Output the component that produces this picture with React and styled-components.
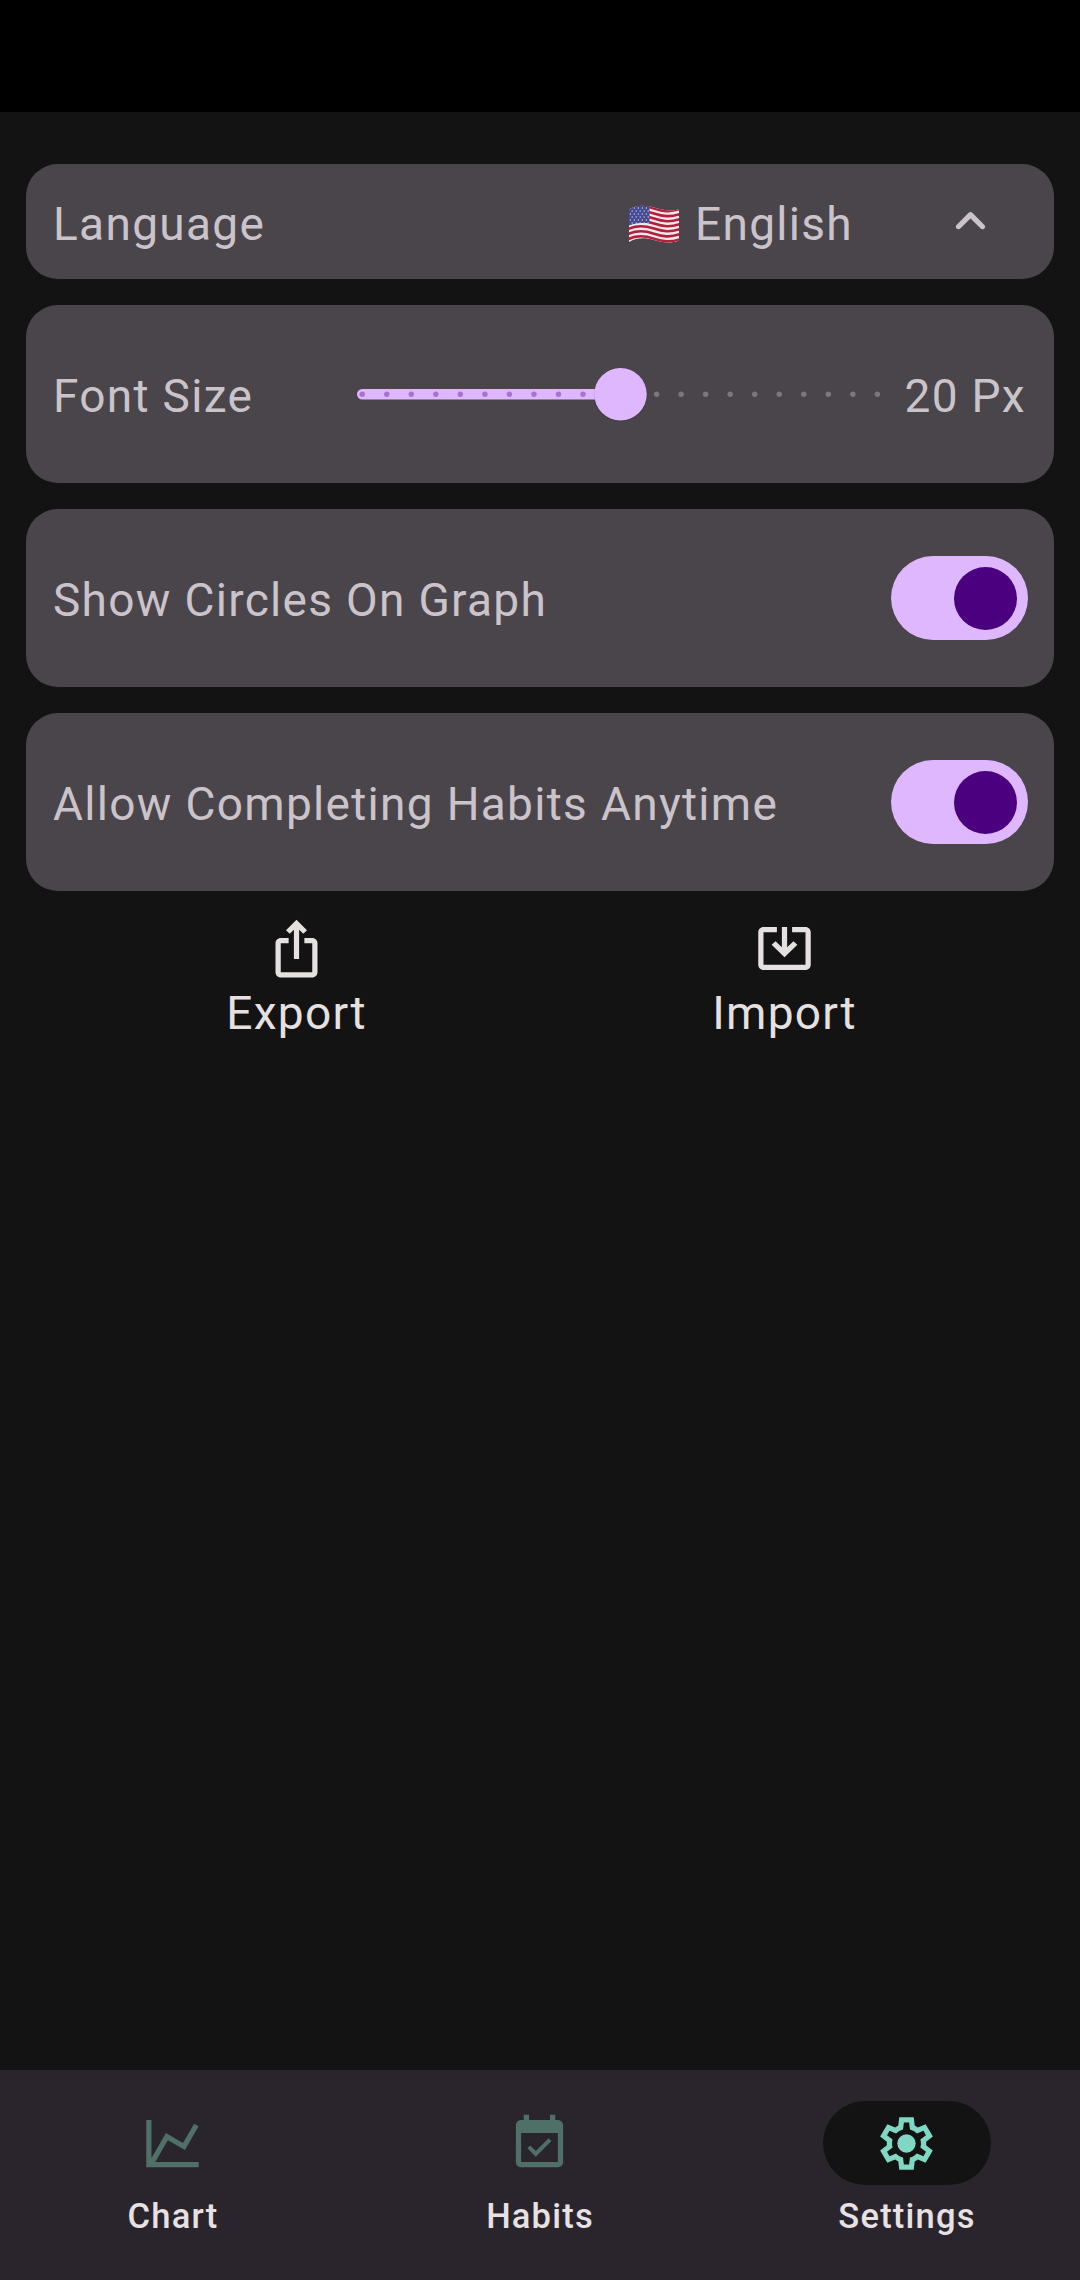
import React from "react";
import styled, { createGlobalStyle } from "styled-components";

const Global = createGlobalStyle`
  body { margin: 0; background: #131313; }
  * { box-sizing: border-box; }
`;

const Screen = styled.div`
  width: 1080px;
  height: 2280px;
  display: flex;
  flex-direction: column;
  background: #131313;
  font-family: Roboto, "Liberation Sans", sans-serif;
`;

const StatusBar = styled.div`
  height: 112px;
  background: #000;
`;

const Content = styled.main`
  flex: 1;
  display: flex;
  flex-direction: column;
  gap: 26px;
  padding: 52px 26px 0;
`;

const Card = styled.section`
  height: ${(p) => p.$height}px;
  display: flex;
  align-items: center;
  justify-content: space-between;
  padding: 0 26px 0 27px;
  border-radius: 32px;
  background: #4a454a;
  color: #cac4ca;
`;

const Label = styled.span`
  font-size: 46px;
  line-height: 63px;
  letter-spacing: 1.31px;
  white-space: nowrap;
  padding-top: 5px;
`;

const SliderValue = styled(Label)`
  width: 124px;
  padding-right: 2px;
  text-align: right;
`;

const LanguagePicker = styled.div`
  display: flex;
  align-items: center;
  padding-right: 26px;
`;

const Flag = styled.svg`
  width: 52px;
  height: 38px;
  margin: 4px 15px 0 0;
`;

const Chevron = styled.svg`
  width: 63px;
  height: 63px;
  margin-left: 86px;
`;

const SliderGroup = styled.div`
  display: flex;
  align-items: center;
  gap: 21px;
`;

const SliderSvg = styled.svg`
  width: 526px;
  height: 60px;
`;

const SwitchTrack = styled.div`
  width: 137px;
  height: 84px;
  padding-right: 11px;
  display: flex;
  align-items: center;
  justify-content: flex-end;
  border-radius: 42px;
  background: #deb7ff;
`;

const SwitchThumb = styled.div`
  width: 63px;
  height: 63px;
  border-radius: 50%;
  background: #4a007f;
`;

const Actions = styled.div`
  display: flex;
`;

const Action = styled.div`
  width: ${(p) => p.$width}px;
  display: flex;
  flex-direction: column;
  align-items: center;
  color: #e6e1e1;
`;

const ActionLabel = styled(Label)`
  padding-top: 2px;
`;

const Icon = styled.svg`
  width: 63px;
  height: 63px;
  fill: currentColor;
`;

const NavBar = styled.nav`
  height: 210px;
  display: flex;
  gap: 21px;
  padding-top: 31px;
  background: #2a252c;
`;

const NavItem = styled.div`
  flex: 1;
  display: flex;
  flex-direction: column;
  align-items: center;
  gap: 10px;
`;

const Pill = styled.div`
  width: 168px;
  height: 84px;
  padding-right: 1px;
  display: flex;
  align-items: center;
  justify-content: center;
  border-radius: 42px;
  background: ${(p) => (p.$active ? "#131313" : "transparent")};
  color: ${(p) => (p.$active ? "#80d8c4" : "#4f6f69")};
`;

const NavLabel = styled.span`
  font-size: 34.5px;
  font-weight: 500;
  line-height: 42px;
  letter-spacing: 1.2px;
  color: #e8e1e4;
`;

const TICKS = 22;

function Slider() {
  return (
    <SliderSvg viewBox="0 0 526 60">
      <rect x="0" y="25" width="264" height="10.5" rx="5.25" fill="#deb7ff" />
      {Array.from({ length: TICKS }, (_, i) => (
        <circle
          key={i}
          cx={5.25 + i * 24.53}
          cy="30.25"
          r="2.7"
          fill={i < 11 ? "#a873cf" : "#7c777c"}
        />
      ))}
      <circle cx="263.5" cy="30.8" r="26.8" fill="#000" opacity=".12" />
      <circle cx="263.5" cy="30.25" r="26.25" fill="#deb7ff" />
    </SliderSvg>
  );
}

const STRIPES = [0, 1, 2, 3, 4, 5, 6];
const STAR_ROWS = [3, 6, 9, 12, 15, 18];
const STAR_COLUMNS = [3, 7, 11, 15, 19];

function UsFlag() {
  const wave = (y) => `M0 ${y + 1.5} C8 ${y - 2.5} 17 ${y - 2} 26 ${y + 1} S42 ${y + 5} 52 ${y + 1.5}`;
  return (
    <Flag viewBox="0 0 52 38">
      <defs>
        <clipPath id="cloth">
          <path d="M1 4.5 C9 -.5 17 0 26 2.5 S42 7 51 4 V35.5 C42 39 35 37.5 26 35 S9 32.5 1 37 Z" />
        </clipPath>
      </defs>
      <g clipPath="url(#cloth)">
        <rect width="52" height="38" fill="#f3e9ec" />
        {STRIPES.map((n) => (
          <path key={n} d={wave(2.4 + n * 5.05)} fill="none" stroke="#b3203c" strokeWidth="2.6" />
        ))}
        <path d="M0 0H21.5V18.3C14 17 8 17.8 0 20.8Z" fill="#434a91" />
        {STAR_ROWS.map((y, r) =>
          STAR_COLUMNS.map((x) => (
            <circle key={`${x}-${y}`} cx={x + (r % 2 ? 1.2 : -0.6)} cy={y} r=".75" fill="#c9cae4" />
          ))
        )}
      </g>
    </Flag>
  );
}

const NAV = [
  {
    label: "Chart",
    icon: <path d="M16 11.78L20.24 4.45L21.97 5.45L16.74 14.5L10.23 10.75L5.46 19H22V21H2V3H4V17.54L9.5 8Z" />,
  },
  {
    label: "Habits",
    icon: (
      <path d="M16.53 11.06L15.47 10l-4.88 4.88-2.12-2.12-1.06 1.06L10.59 17l5.94-5.94zM19 3h-1V1h-2v2H8V1H6v2H5c-1.11 0-1.99.9-1.99 2L3 19c0 1.1.89 2 2 2h14c1.1 0 2-.9 2-2V5c0-1.1-.9-2-2-2zm0 16H5V8h14v11z" />
    ),
  },
  {
    label: "Settings",
    active: true,
    icon: (
      <>
        <path
          fillRule="evenodd"
          d="M9.25 22l-.4-3.2q-.325-.125-.612-.3-.288-.175-.563-.375L4.7 19.375l-2.75-4.75 2.575-1.95Q4.5 12.5 4.5 12.337v-.675q0-.162.025-.337L1.95 9.375l2.75-4.75 2.975 1.25q.275-.2.575-.375.3-.175.6-.3l.4-3.2h5.5l.4 3.2q.325.125.613.3.287.175.562.375l2.975-1.25 2.75 4.75-2.575 1.95q.025.175.025.338v.674q0 .163-.05.338l2.575 1.95-2.75 4.75-2.95-1.25q-.275.2-.575.375-.3.175-.6.3l-.4 3.2Zm1.75-2h1.975l.35-2.65q.775-.2 1.438-.588.662-.387 1.212-.937l2.475 1.025.975-1.7-2.15-1.625q.125-.35.175-.737.05-.388.05-.788t-.05-.787q-.05-.388-.175-.738l2.15-1.625-.975-1.7-2.475 1.05q-.55-.575-1.212-.963-.663-.387-1.438-.587L13 4h-1.975l-.35 2.65q-.775.2-1.437.587-.663.388-1.213.938L5.55 7.15l-.975 1.7 2.15 1.6q-.125.375-.175.75-.05.375-.05.8 0 .4.05.775t.175.75l-2.15 1.625.975 1.7 2.475-1.05q.55.575 1.213.963.662.387 1.437.587Z"
        />
        <circle cx="12" cy="12" r="3.5" />
      </>
    ),
  },
];

export default function App() {
  return (
    <Screen>
      <Global />
      <StatusBar />
      <Content>
        <Card $height={115}>
          <Label>Language</Label>
          <LanguagePicker>
            <UsFlag />
            <Label>English</Label>
            <Chevron viewBox="0 0 24 24">
              <path
                fill="currentColor"
                d="M8.12 14.71L12 10.83l3.88 3.88c.39.39 1.02.39 1.41 0 .39-.39.39-1.02 0-1.41L12.7 8.71c-.39-.39-1.02-.39-1.41 0L6.7 13.3c-.39.39-.39 1.02 0 1.41.39.38 1.03.39 1.42 0z"
              />
            </Chevron>
          </LanguagePicker>
        </Card>
        <Card $height={178}>
          <Label>Font Size</Label>
          <SliderGroup>
            <Slider />
            <SliderValue>20 Px</SliderValue>
          </SliderGroup>
        </Card>
        <Card $height={178}>
          <Label>Show Circles On Graph</Label>
          <SwitchTrack>
            <SwitchThumb />
          </SwitchTrack>
        </Card>
        <Card $height={178}>
          <Label>Allow Completing Habits Anytime</Label>
          <SwitchTrack>
            <SwitchThumb />
          </SwitchTrack>
        </Card>
        <Actions>
          <Action $width={541}>
            <Icon viewBox="0 0 24 24">
              <path d="M16 5l-1.42 1.42-1.59-1.59V16h-1.98V4.83L9.42 6.42 8 5l4-4 4 4zm4 5v11c0 1.1-.9 2-2 2H6c-1.11 0-2-.9-2-2V10c0-1.11.89-2 2-2h3v2H6v11h12V10h-3V8h3c1.1 0 2 .89 2 2z" />
            </Icon>
            <ActionLabel>Export</ActionLabel>
          </Action>
          <Action $width={435}>
            <Icon viewBox="0 0 24 24">
              <path d="M9.1 3.8H4c-1.1 0-2 .9-2 2v12.4c0 1.1.9 2 2 2h16c1.1 0 2-.9 2-2V5.8c0-1.1-.9-2-2-2h-5.1v2H20v12.4H4V5.8h5.1zM11 3.8h2v7.7l2.4-2.3 1.5 1.4L12 15.3l-4.9-4.7 1.5-1.4 2.4 2.3z" />
            </Icon>
            <ActionLabel>Import</ActionLabel>
          </Action>
        </Actions>
      </Content>
      <NavBar>
        {NAV.map((n) => (
          <NavItem key={n.label}>
            <Pill $active={n.active}>
              <Icon viewBox="0 0 24 24">{n.icon}</Icon>
            </Pill>
            <NavLabel>{n.label}</NavLabel>
          </NavItem>
        ))}
      </NavBar>
    </Screen>
  );
}
